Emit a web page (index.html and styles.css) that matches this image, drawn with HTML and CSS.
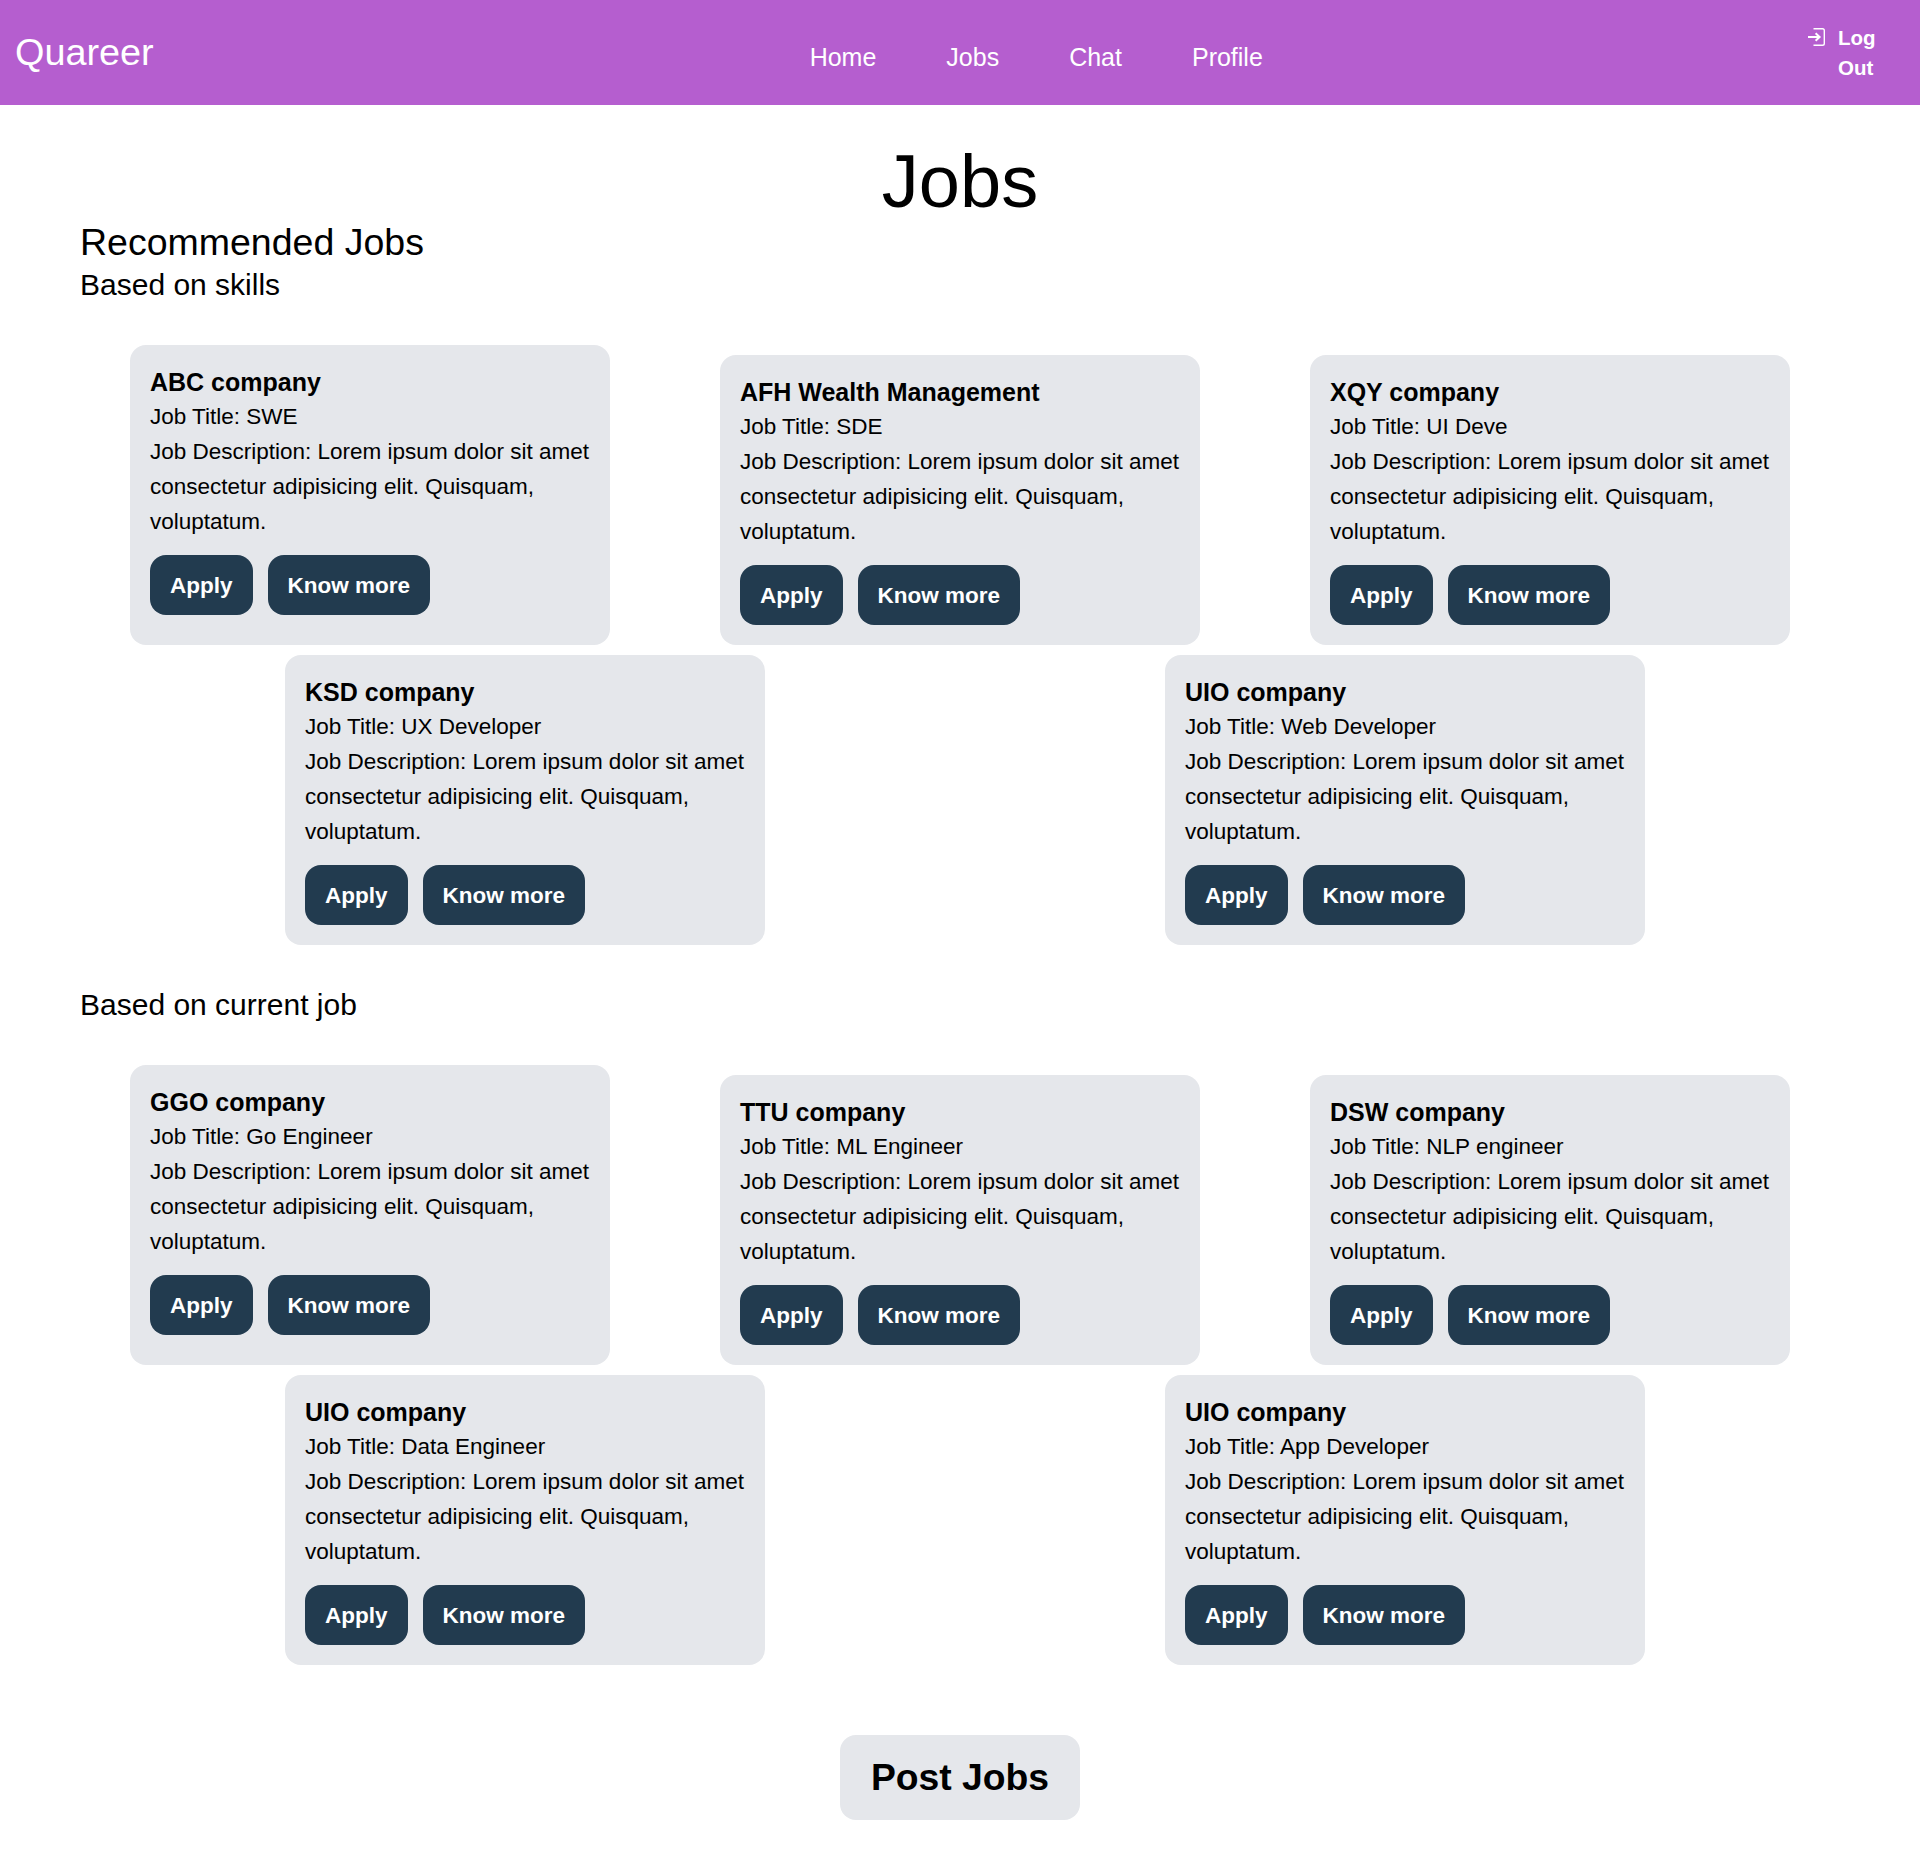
FILE: index.html
```html
<!DOCTYPE html>
<html lang="en">
<head>
    <meta charset="UTF-8">
    <meta name="viewport" content="width=device-width, initial-scale=1.0">
    <title>Jobs</title>
    <link rel="stylesheet" href="styles.css">
</head>
<body>
    <nav class="navbar">
        <a href="#" class="logo">Quareer</a>
        <div class="nav-links">
            <a href="#">Home</a>
            <a href="#">Jobs</a>
            <a href="#">Chat</a>
            <a href="#">Profile</a>
        </div>
        <a href="#" class="logout">
            <svg class="logout-icon" viewBox="0 0 17 18" fill="none" stroke="currentColor" stroke-width="1.4">
                <path d="M5.5 .7h9a1.8 1.8 0 0 1 1.8 1.8v13a1.8 1.8 0 0 1-1.8 1.8h-9"/>
                <path d="M0 9h11" stroke-width="2"/>
                <path d="M7.6 5.2l4 3.8-4 3.8" stroke-width="2"/>
            </svg>
            <span>Log Out</span>
        </a>
    </nav>

    <main class="content">
        <h1>Jobs</h1>
        <h2>Recommended Jobs</h2>
        <h3>Based on skills</h3>

        <div class="row row-three">
            <div class="card card-first">
                <h4>ABC company</h4>
                <p>Job Title: SWE</p>
                <p>Job Description: Lorem ipsum dolor sit amet consectetur adipisicing elit. Quisquam, voluptatum.</p>
                <div class="actions"><a href="#" class="btn">Apply</a><a href="#" class="btn">Know more</a></div>
            </div>
            <div class="card">
                <h4>AFH Wealth Management</h4>
                <p>Job Title: SDE</p>
                <p>Job Description: Lorem ipsum dolor sit amet consectetur adipisicing elit. Quisquam, voluptatum.</p>
                <div class="actions"><a href="#" class="btn">Apply</a><a href="#" class="btn">Know more</a></div>
            </div>
            <div class="card">
                <h4>XQY company</h4>
                <p>Job Title: UI Deve</p>
                <p>Job Description: Lorem ipsum dolor sit amet consectetur adipisicing elit. Quisquam, voluptatum.</p>
                <div class="actions"><a href="#" class="btn">Apply</a><a href="#" class="btn">Know more</a></div>
            </div>
        </div>
        <div class="row row-two">
            <div class="card">
                <h4>KSD company</h4>
                <p>Job Title: UX Developer</p>
                <p>Job Description: Lorem ipsum dolor sit amet consectetur adipisicing elit. Quisquam, voluptatum.</p>
                <div class="actions"><a href="#" class="btn">Apply</a><a href="#" class="btn">Know more</a></div>
            </div>
            <div class="card">
                <h4>UIO company</h4>
                <p>Job Title: Web Developer</p>
                <p>Job Description: Lorem ipsum dolor sit amet consectetur adipisicing elit. Quisquam, voluptatum.</p>
                <div class="actions"><a href="#" class="btn">Apply</a><a href="#" class="btn">Know more</a></div>
            </div>
        </div>

        <h3 class="section-gap">Based on current job</h3>

        <div class="row row-three">
            <div class="card card-first">
                <h4>GGO company</h4>
                <p>Job Title: Go Engineer</p>
                <p>Job Description: Lorem ipsum dolor sit amet consectetur adipisicing elit. Quisquam, voluptatum.</p>
                <div class="actions"><a href="#" class="btn">Apply</a><a href="#" class="btn">Know more</a></div>
            </div>
            <div class="card">
                <h4>TTU company</h4>
                <p>Job Title: ML Engineer</p>
                <p>Job Description: Lorem ipsum dolor sit amet consectetur adipisicing elit. Quisquam, voluptatum.</p>
                <div class="actions"><a href="#" class="btn">Apply</a><a href="#" class="btn">Know more</a></div>
            </div>
            <div class="card">
                <h4>DSW company</h4>
                <p>Job Title: NLP engineer</p>
                <p>Job Description: Lorem ipsum dolor sit amet consectetur adipisicing elit. Quisquam, voluptatum.</p>
                <div class="actions"><a href="#" class="btn">Apply</a><a href="#" class="btn">Know more</a></div>
            </div>
        </div>
        <div class="row row-two">
            <div class="card">
                <h4>UIO company</h4>
                <p>Job Title: Data Engineer</p>
                <p>Job Description: Lorem ipsum dolor sit amet consectetur adipisicing elit. Quisquam, voluptatum.</p>
                <div class="actions"><a href="#" class="btn">Apply</a><a href="#" class="btn">Know more</a></div>
            </div>
            <div class="card">
                <h4>UIO company</h4>
                <p>Job Title: App Developer</p>
                <p>Job Description: Lorem ipsum dolor sit amet consectetur adipisicing elit. Quisquam, voluptatum.</p>
                <div class="actions"><a href="#" class="btn">Apply</a><a href="#" class="btn">Know more</a></div>
            </div>
        </div>

        <div class="post-wrap">
            <a href="#" class="post-btn">Post Jobs</a>
        </div>
    </main>
</body>
</html>
```

FILE: styles.css
```css
* {
    box-sizing: border-box;
}

body {
    margin: 0;
    font-family: "Liberation Sans", Arial, sans-serif;
    color: #000;
    background: #fff;
}

a {
    text-decoration: none;
    color: inherit;
}

.navbar {
    display: flex;
    height: 105px;
    padding: 0 22px 0 15px;
    background-color: #b55ecf;
    color: #fff;
}

.logo {
    font-size: 37.8px;
    line-height: 105px;
}

.nav-links {
    display: flex;
    gap: 70px;
    margin-left: 656px;
    padding-top: 41px;
    font-size: 25px;
    line-height: 32px;
}

.logout {
    display: flex;
    align-items: flex-start;
    gap: 13px;
    width: 90px;
    margin-left: auto;
    padding-top: 23px;
    font-size: 20.5px;
    font-weight: bold;
    line-height: 30px;
}

.logout-icon {
    flex: none;
    width: 17px;
    height: 18px;
    margin-top: 5px;
}

.content {
    padding: 38px 80px 0;
}

h1 {
    margin: 0;
    font-size: 74px;
    font-weight: normal;
    line-height: 77px;
    text-align: center;
}

h2 {
    margin: 0;
    font-size: 37.5px;
    font-weight: normal;
    line-height: 44px;
}

h3 {
    margin: 1px 0 0;
    font-size: 30px;
    font-weight: normal;
    line-height: 40px;
}

h3.section-gap {
    margin-top: 40px;
}

.row {
    display: flex;
    align-items: flex-end;
    margin-bottom: 10px;
}

.row-three {
    gap: 110px;
    padding-left: 50px;
    margin-top: 40px;
}

.row-two {
    gap: 400px;
    padding-left: 205px;
}

.card {
    width: 480px;
    padding: 20px;
    border-radius: 16px;
    background-color: #e5e7eb;
}

.card-first {
    padding-bottom: 30px;
}

.card h4 {
    margin: 0;
    font-size: 25px;
    line-height: 34px;
}

.card p {
    margin: 0;
    font-size: 22.5px;
    line-height: 35px;
}

.actions {
    display: flex;
    gap: 15px;
    margin-top: 16px;
}

.btn {
    padding: 15px 20px 13px;
    border-radius: 16px;
    background-color: #223b4f;
    color: #fff;
    font-size: 22.5px;
    font-weight: bold;
    line-height: 32px;
}

.post-wrap {
    display: flex;
    justify-content: center;
    margin-top: 70px;
}

.post-btn {
    padding: 20px 31px;
    border-radius: 16px;
    background-color: #e5e7eb;
    font-size: 37.3px;
    font-weight: bold;
    line-height: 45px;
}
```
